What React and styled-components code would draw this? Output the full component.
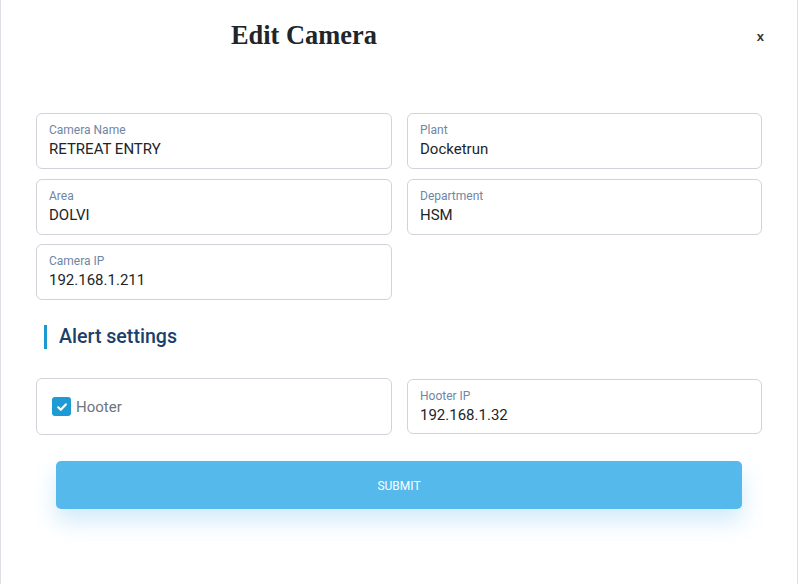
import React from "react";
import styled, { createGlobalStyle } from "styled-components";

const Global = createGlobalStyle`
  html, body { margin: 0; padding: 0; background: #fff; }
  body { font-family: Roboto, "Liberation Sans", sans-serif; }
  * { box-sizing: border-box; }
`;

const Modal = styled.div`
  width: 798px;
  height: 584px;
  background: #fff;
  border-left: 1px solid #dcdfe3;
  border-right: 1px solid #dcdfe3;
  display: flex;
  flex-direction: column;
`;

const Header = styled.div`
  display: flex;
  align-items: flex-start;
  justify-content: space-between;
  padding: 19px 33px 0 230px;
  height: 113px;
`;

const Title = styled.h2`
  margin: 0;
  font-family: "Liberation Serif", "Times New Roman", serif;
  font-weight: 700;
  font-size: 26.4px;
  line-height: 32px;
  color: #212529;
`;

const Close = styled.button`
  border: 0;
  background: transparent;
  padding: 0;
  margin-top: 10px;
  font-family: "Liberation Sans", Arial, sans-serif;
  font-weight: 700;
  font-size: 13px;
  line-height: 16px;
  color: #333;
  cursor: pointer;
`;

const Body = styled.div`
  padding: 0 36px 0 35px;
  display: flex;
  flex-direction: column;
`;

const Grid = styled.div`
  display: grid;
  grid-template-columns: 356px 355px;
  column-gap: 15px;
  row-gap: 9.5px;
  align-items: center;
`;

const Field = styled.label`
  display: flex;
  flex-direction: column;
  height: ${(p) => p.$h || 56}px;
  border: 1px solid #d0d4da;
  border-radius: 6px;
  padding: 9px 12px 0;
  background: #fff;
`;

const Label = styled.span`
  font-size: 12px;
  line-height: 14px;
  color: #6f86a5;
`;

const Value = styled.span`
  margin-top: 3px;
  font-size: 15px;
  line-height: 18px;
  color: #212529;
`;

const Section = styled.div`
  display: flex;
  align-items: center;
  gap: 12px;
  margin: 25px 0 29px 8px;
  height: 24px;
`;

const Bar = styled.span`
  width: 3px;
  height: 24px;
  background: #1b9ad2;
`;

const SectionTitle = styled.h3`
  margin: 0;
  font-size: 19.6px;
  font-weight: 500;
  color: #1c3f6c;
  line-height: 24px;
`;

const CheckBox = styled.div`
  display: flex;
  align-items: center;
  gap: 5px;
  height: 57px;
  border: 1px solid #d0d4da;
  border-radius: 6px;
  padding: 0 15px;
`;

const Box = styled.span`
  width: 19px;
  height: 19px;
  border-radius: 3px;
  background: #1e9bd3;
  display: flex;
  align-items: center;
  justify-content: center;
`;

const CheckLabel = styled.span`
  font-size: 15px;
  color: #6c757d;
`;

const Submit = styled.button`
  margin: 26px 19px 0 20px;
  height: 48px;
  padding-top: 3px;
  border: 0;
  border-radius: 5px;
  background: #56b9ec;
  color: #fff;
  font-family: Roboto, sans-serif;
  font-size: 12px;
  letter-spacing: 0;
  box-shadow: 0 12px 22px rgba(86, 180, 236, 0.28);
  cursor: pointer;
`;

const fields = [
  ["Camera Name", "RETREAT ENTRY"],
  ["Plant", "Docketrun"],
  ["Area", "DOLVI"],
  ["Department", "HSM"],
  ["Camera IP", "192.168.1.211"],
];

export default function App() {
  return (
    <>
      <Global />
      <Modal>
        <Header>
          <Title>Edit Camera</Title>
          <Close>x</Close>
        </Header>
        <Body>
          <Grid>
            {fields.map(([l, v]) => (
              <Field key={l}>
                <Label>{l}</Label>
                <Value>{v}</Value>
              </Field>
            ))}
          </Grid>
          <Section>
            <Bar />
            <SectionTitle>Alert settings</SectionTitle>
          </Section>
          <Grid>
            <CheckBox>
              <Box>
                <svg width="12" height="12" viewBox="0 0 12 12">
                  <path d="M2.2 6.3 L4.8 8.8 L9.8 3.4" fill="none" stroke="#fff" strokeWidth="2.2" strokeLinecap="round" strokeLinejoin="round" />
                </svg>
              </Box>
              <CheckLabel>Hooter</CheckLabel>
            </CheckBox>
            <Field $h={55}>
              <Label>Hooter IP</Label>
              <Value>192.168.1.32</Value>
            </Field>
          </Grid>
          <Submit>SUBMIT</Submit>
        </Body>
      </Modal>
    </>
  );
}
